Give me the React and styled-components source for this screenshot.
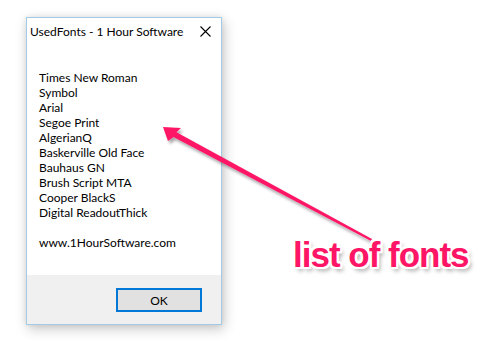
import React from 'react';
import styled, { createGlobalStyle } from 'styled-components';

const GlobalStyle = createGlobalStyle`
  html, body {
    margin: 0;
    padding: 0;
    background: #ffffff;
  }
`;

const uiFont = `Lato, 'Noto Sans', sans-serif`;

const Stage = styled.div`
  position: relative;
  width: 501px;
  height: 341px;
  padding: 17px 0 0 26px;
  box-sizing: border-box;
  overflow: hidden;
  font-family: ${uiFont};
`;

const Window = styled.div`
  width: 196px;
  height: 308px;
  box-sizing: border-box;
  border: 1px solid #a3cbe6;
  background: #ffffff;
  display: flex;
  flex-direction: column;
  box-shadow: 2px 4px 12px rgba(0, 0, 0, 0.22), 0 0 6px rgba(0, 0, 0, 0.08);
`;

const TitleBar = styled.div`
  height: 26px;
  display: flex;
  align-items: center;
  justify-content: space-between;
  padding: 0 10px 0 3px;
  font-size: 12px;
  color: #000000;
`;

const CloseIcon = () => (
  <svg width="11" height="11" viewBox="0 0 11 11">
    <path d="M0.5 0.5 L10.5 10.5 M10.5 0.5 L0.5 10.5" stroke="#000" strokeWidth="1.1" fill="none" />
  </svg>
);

const Body = styled.div`
  flex: 1;
  padding: 26px 0 0 12px;
  font-size: 12px;
  line-height: 15px;
  color: #000000;
`;

const FontLine = styled.div`
  white-space: nowrap;
  margin-top: ${({ gap }) => (gap ? '15px' : '0')};
`;

const Footer = styled.div`
  height: 49px;
  background: #f0f0f0;
  display: flex;
  justify-content: flex-end;
  align-items: flex-start;
  padding: 13px 19px 0 0;
  box-sizing: border-box;
`;

const OkButton = styled.button`
  width: 86px;
  height: 24px;
  box-sizing: border-box;
  border: 2px solid #0078d7;
  background: #e1e1e1;
  font-family: ${uiFont};
  font-size: 12px;
  color: #000000;
  padding: 0;
`;

const Arrow = styled.svg`
  position: absolute;
  left: 0;
  top: 0;
  pointer-events: none;
  overflow: visible;
`;

const Callout = styled.div`
  position: absolute;
  left: 293px;
  top: 235px;
  font-family: 'Liberation Sans', Arial, sans-serif;
  font-weight: bold;
  font-size: 35px;
  letter-spacing: -1px;
  line-height: 40px;
  color: #fe1566;
  text-shadow:
    -2px 0 0 #fff, 2px 0 0 #fff, 0 -2px 0 #fff, 0 2px 0 #fff,
    -2px -2px 0 #fff, 2px 2px 0 #fff, -2px 2px 0 #fff, 2px -2px 0 #fff,
    3px 4px 4px rgba(0, 0, 0, 0.35);
`;

const fonts = [
  'Times New Roman',
  'Symbol',
  'Arial',
  'Segoe Print',
  'AlgerianQ',
  'Baskerville Old Face',
  'Bauhaus GN',
  'Brush Script MTA',
  'Cooper BlackS',
  'Digital ReadoutThick',
];

export default function App() {
  return (
    <Stage>
      <GlobalStyle />
      <Window>
        <TitleBar>
          <span>UsedFonts - 1 Hour Software</span>
          <CloseIcon />
        </TitleBar>
        <Body>
          {fonts.map((f) => (
            <FontLine key={f}>{f}</FontLine>
          ))}
          <FontLine gap>www.1HourSoftware.com</FontLine>
        </Body>
        <Footer>
          <OkButton>OK</OkButton>
        </Footer>
      </Window>
      <Arrow width="501" height="341" viewBox="0 0 501 341">
        <defs>
          <filter id="arrowShadow" x="-10%" y="-10%" width="130%" height="130%">
            <feDropShadow dx="2" dy="3" stdDeviation="1.5" floodColor="#000" floodOpacity="0.35" />
          </filter>
        </defs>
        <g filter="url(#arrowShadow)" fill="#fe1566">
          <path d="M163 127 L181 128 L176.5 132.2 L372 239 L371 241 L173.5 137 L168 141 Z" />
        </g>
      </Arrow>
      <Callout>list of fonts</Callout>
    </Stage>
  );
}
